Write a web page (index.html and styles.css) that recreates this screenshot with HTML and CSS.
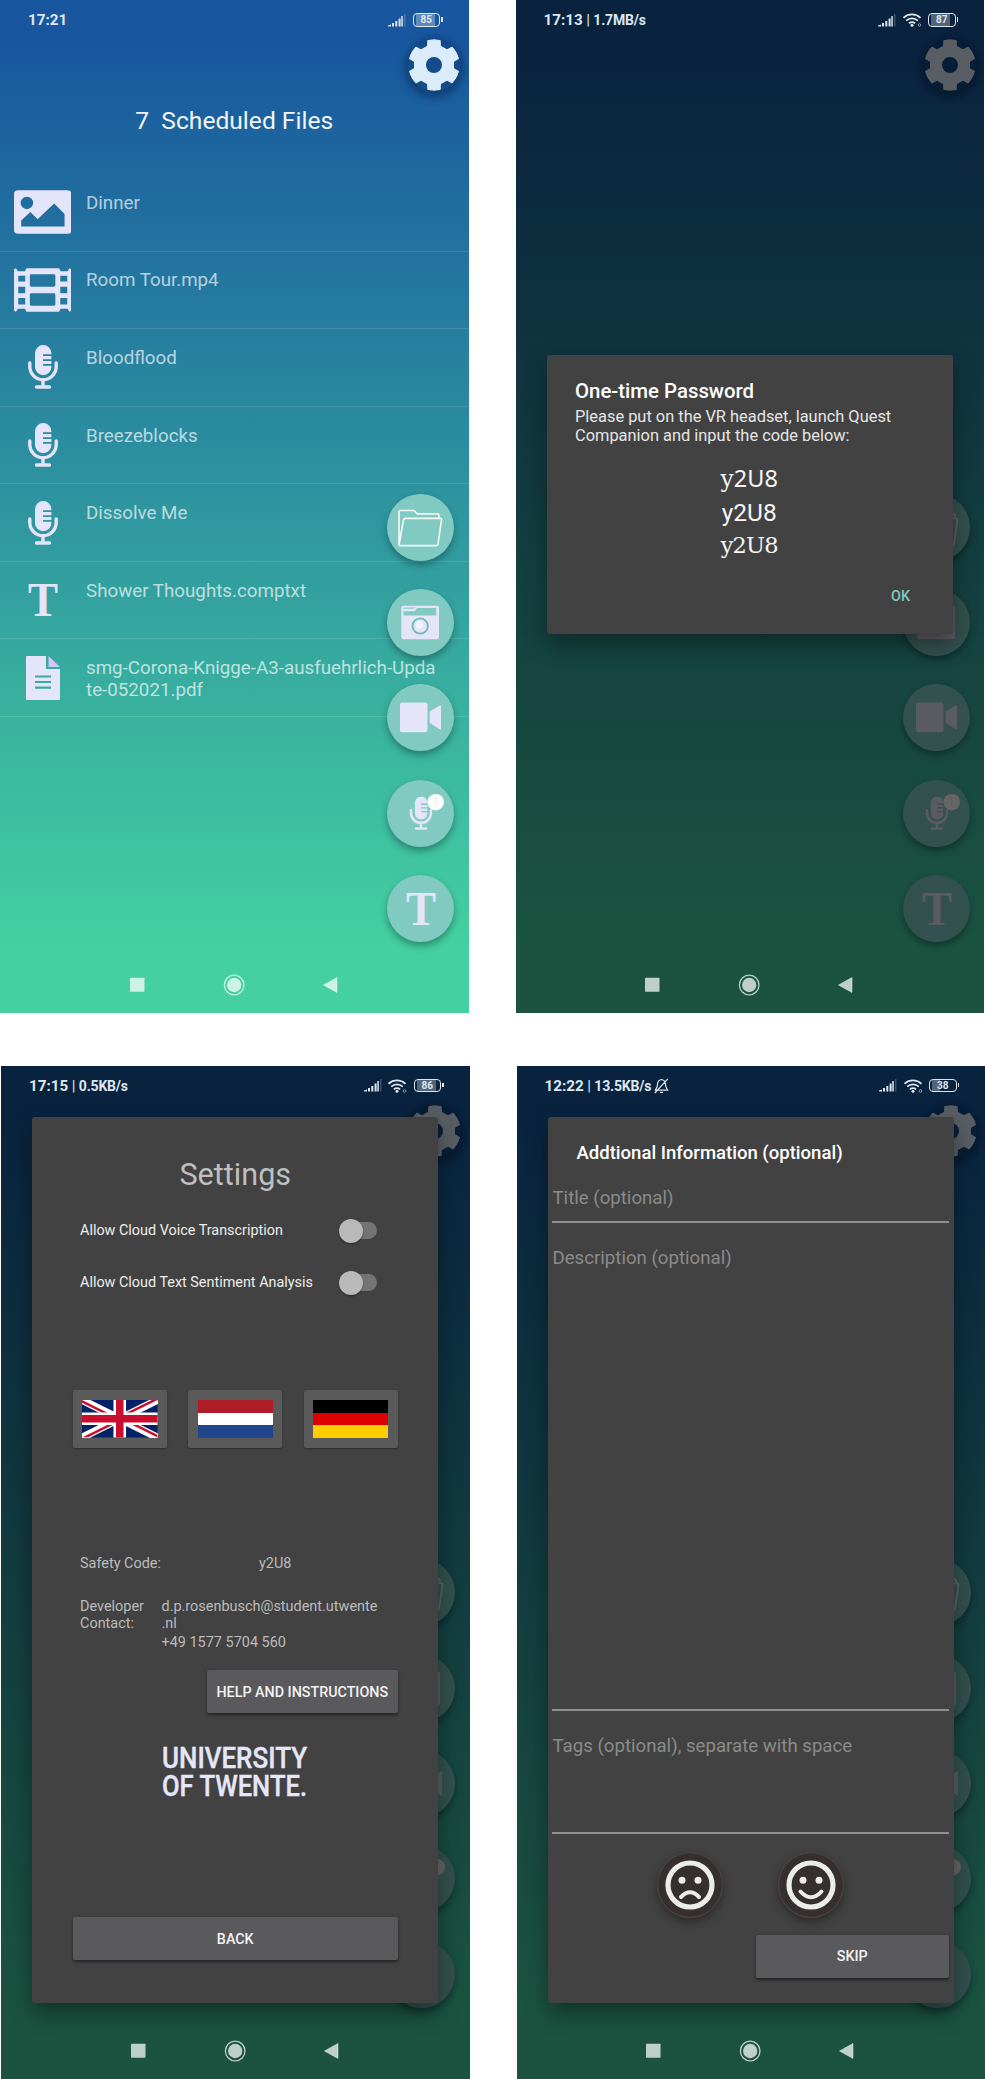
FILE: index.html
```html
<!DOCTYPE html>
<html lang="en">
<head>
<meta charset="utf-8">
<title>Quest Companion</title>
<link rel="stylesheet" href="styles.css">
</head>
<body>
<svg class="sprite" aria-hidden="true">
  <symbol id="signal" viewBox="0 0 18 13">
    <path d="M0 11.5l3-1v2H0zM4 9h2v3.5H4zM7.3 7h2v5.500h-2zM10.600 4.500h2v8h-2zM13.300 2h1.500v10.500h-1.500z" fill="currentColor"/>
    <path d="M16.300 0h1v12.500h-1z" fill="currentColor" opacity=".35"/>
  </symbol>
  <symbol id="wifi" viewBox="0 0 19 14">
    <g fill="none" stroke="currentColor" stroke-width="1.700">
      <path d="M.5 4.800a12.500 12.500 0 0 1 17 0M3.200 7.700a8.500 8.500 0 0 1 11.600 0M5.900 10.400a4.600 4.600 0 0 1 6.200 0"/>
    </g>
    <circle cx="9" cy="12.300" r="1.500" fill="currentColor"/>
    <circle cx="16.500" cy="12" r="1.300" fill="none" stroke="currentColor" stroke-width=".8" opacity=".7"/>
  </symbol>
  <symbol id="gear" viewBox="-78 -78 156 156">
    <path fill="currentColor" stroke="currentColor" stroke-width="4" stroke-linejoin="round" fill-rule="evenodd" d="M-18-73A76 76 0 0 1 18-73L19-56 39-45 54-53A76 76 0 0 1 73-20L58-11V11L73 20A76 76 0 0 1 54 53L39 45 19 56 18 73A76 76 0 0 1-18 73L-19 56-39 45-54 53A76 76 0 0 1-73 20L-58 11V-11L-73-20A76 76 0 0 1-54-53L-39-45-19-56zM0-26A26 26 0 0 0 0 26A26 26 0 0 0 0-26z"/>
  </symbol>
  <symbol id="image" viewBox="0 0 58 44">
    <path fill="currentColor" fill-rule="evenodd" d="M4 0h50a4 4 0 0 1 4 4v36a4 4 0 0 1-4 4H4a4 4 0 0 1-4-4V4a4 4 0 0 1 4-4zM13 6.500a6.300 6.300 0 0 0 0 12.600 6.300 6.300 0 0 0 0-12.600zM7.300 30.500L16.500 22l7.300 7.300L40.500 13.300 51 24v12.700H7.300z"/>
  </symbol>
  <symbol id="film" viewBox="0 0 58 44">
    <path fill="currentColor" fill-rule="evenodd" d="M2 0L4 3h7l1.500-3h33L47 3h7l2-3 2 1v42l-2 1-2-3h-7l-1.500 3h-33L11 41H4l-2 3-2-1V1zM17.500 6a1.500 1.500 0 0 0-1.500 1.500v9.700a1.500 1.500 0 0 0 1.500 1.500h22.700a1.500 1.500 0 0 0 1.500-1.500V7.500A1.500 1.500 0 0 0 40.200 6zM17.500 25.300a1.500 1.500 0 0 0-1.500 1.500v9.700a1.500 1.500 0 0 0 1.500 1.500h22.700a1.500 1.500 0 0 0 1.500-1.500v-9.700a1.500 1.500 0 0 0-1.500-1.500zM4.300 7.500v6h7v-6zM4.300 18.700v6.500h7v-6.500zM4.300 30v6.500h7V30zM46.700 7.500v6h7v-6zM46.700 18.700v6.500h7v-6.500zM46.700 30v6.500h7V30z"/>
  </symbol>
  <symbol id="mic" viewBox="0 0 30 44">
    <path fill="currentColor" d="M7 8.200a8.200 8.200 0 0 1 16.400 0v1.100h-8.400v1.700h8.400v3.200h-8.400v1.700h8.400v3.200h-8.400v1.700h8.400v1.200a8.200 8.200 0 0 1-16.400 0z"/>
    <path fill="none" stroke="currentColor" stroke-width="3.400" stroke-linecap="round" d="M1.800 18v3.500a13.200 13.200 0 0 0 26.400 0V18M15 35v6M8.500 42h13"/>
  </symbol>
  <symbol id="doc" viewBox="0 0 34 44">
    <path fill="currentColor" d="M1 0h19v13h14v30a1 1 0 0 1-1 1H1a1 1 0 0 1-1-1V1a1 1 0 0 1 1-1z"/>
    <path fill="#cfc8fa" d="M22.500 0L34 11H22.500z"/>
    <path stroke="#36ab9f" stroke-width="2.200" d="M9 20.500h16M9 26h16M9 31.700h16"/>
  </symbol>
  <symbol id="letter" viewBox="0 0 32 34">
    <text x="16" y="33" text-anchor="middle" textLength="30" lengthAdjust="spacingAndGlyphs" class="letter-t">T</text>
  </symbol>
  <symbol id="f-folder" viewBox="-33.500 -33.500 67 67">
    <path fill="none" stroke="#f3f7f6" stroke-width="1.700" stroke-linejoin="round" d="M-21.500 17V-15.500Q-21.500-17-20-17H-7Q-6-17-5-15.500L-3.500-13.700H17Q18.500-13.700 18.500-12V-9.200M-15-9.200H19.500Q21.300-9.200 21-7.500L17.500 16.500Q17.300 18.200 15.500 18.200H-20Q-21.700 18.200-21.300 16.500L-17-7.500Q-16.600-9.200-15-9.200z"/>
  </symbol>
  <symbol id="f-camera" viewBox="-33.500 -33.500 67 67">
    <path fill="currentColor" fill-rule="evenodd" d="M-17.500-16.700H16.500Q18.500-16.700 18.500-14.700V14.700Q18.500 16.700 16.500 16.700H-17Q-19.200 16.700-19.200 14.700V-14.700Q-19.200-16.700-17.500-16.700zM-17-14.700V-13.700H-7L-5-15zM-17-11.200V-7H15.700V-14.500H-3.500L-6-11.200z"/>
    <circle cx="-.3" cy="3.500" r="7.700" fill="currentColor" stroke="#6cb9ae" stroke-width="1.800"/>
    <circle cx="-1" cy="2.500" r="3.500" fill="#f3f2fd"/>
  </symbol>
  <symbol id="f-video" viewBox="-33.500 -33.500 67 67">
    <rect x="-20.500" y="-15" width="27.500" height="29.700" rx="2.500" fill="currentColor"/>
    <path fill="currentColor" d="M9.200-6L19.500-12.300Q20.500-12.500 20.500-11.500V11Q20.500 12.500 19.500 12L9.200 5.500z"/>
  </symbol>
  <symbol id="f-voice" viewBox="-33.500 -33.500 67 67">
    <use href="#mic" x="-11" y="-17" width="23" height="33.500"/>
    <circle cx="15.200" cy="-11.300" r="8.300" fill="#fff"/>
    <path d="M12.800-15.500h4.600M15.100-15.500v8" stroke="#ececf4" stroke-width="1.200"/>
  </symbol>
  <symbol id="f-text" viewBox="-33.500 -33.500 67 67">
    <use href="#letter" x="-15.500" y="-17" width="32" height="34"/>
  </symbol>
  <symbol id="controls" viewBox="0 0 208 22">
    <g fill="currentColor">
      <rect x="0" y="3.700" width="14.500" height="14" rx=".6"/>
      <circle cx="104.200" cy="11" r="7.200"/>
      <path d="M207 3.500v15L193.500 11z" stroke="currentColor" stroke-linejoin="round" stroke-width=".6"/>
    </g>
    <circle cx="104.200" cy="11" r="9.800" fill="none" stroke="currentColor" stroke-width="1.300"/>
  </symbol>
  <symbol id="bell-off" viewBox="0 0 15 16">
    <path fill="none" stroke="currentColor" stroke-width="1.200" stroke-linejoin="round" d="M7.500 1.500C4.500 2 3.500 4 3.500 6.500S2.500 10 1.200 12.200H13.800C12.300 10 11.500 9 11.500 6.500S10.500 2 7.500 1.500zM6 14.300h3M.8 15L13.800.8"/>
  </symbol>
</svg>

<main class="gallery">
  <section class="phone">
    <header class="status">
      <span class="time">17:21</span>
      <span class="status-icons">
        <svg class="signal"><use href="#signal"/></svg>
        <span class="battery">85</span>
      </span>
    </header>
    <div class="gear-row"><svg class="gear"><use href="#gear"/></svg></div>
    <h1 class="heading">7&nbsp; Scheduled Files</h1>
    <ul class="files">
      <li><span class="thumb"><svg class="wide"><use href="#image"/></svg></span><span class="name">Dinner</span></li>
      <li><span class="thumb"><svg class="wide"><use href="#film"/></svg></span><span class="name">Room Tour.mp4</span></li>
      <li><span class="thumb"><svg class="mic"><use href="#mic"/></svg></span><span class="name">Bloodflood</span></li>
      <li><span class="thumb"><svg class="mic"><use href="#mic"/></svg></span><span class="name">Breezeblocks</span></li>
      <li><span class="thumb"><svg class="mic"><use href="#mic"/></svg></span><span class="name">Dissolve Me</span></li>
      <li><span class="thumb"><svg class="tee"><use href="#letter"/></svg></span><span class="name">Shower Thoughts.comptxt</span></li>
      <li><span class="thumb"><svg class="doc"><use href="#doc"/></svg></span><span class="name">smg-Corona-Knigge-A3-ausfuehrlich-Update-052021.pdf</span></li>
    </ul>
    <div class="fabs">
      <svg class="fab"><use href="#f-folder"/></svg>
      <svg class="fab"><use href="#f-camera"/></svg>
      <svg class="fab"><use href="#f-video"/></svg>
      <svg class="fab"><use href="#f-voice"/></svg>
      <svg class="fab"><use href="#f-text"/></svg>
    </div>
    <footer class="nav"><svg class="controls"><use href="#controls"/></svg></footer>
  </section>

  <section class="phone">
    <header class="status">
      <span class="time">17:13<i>|</i><b>1.7MB/s</b></span>
      <span class="status-icons">
        <svg class="signal"><use href="#signal"/></svg>
        <svg class="wifi"><use href="#wifi"/></svg>
        <span class="battery">87</span>
      </span>
    </header>
    <div class="gear-row"><svg class="gear"><use href="#gear"/></svg></div>
    <div class="fabs">
      <svg class="fab"><use href="#f-folder"/></svg>
      <svg class="fab"><use href="#f-camera"/></svg>
      <svg class="fab"><use href="#f-video"/></svg>
      <svg class="fab"><use href="#f-voice"/></svg>
      <svg class="fab"><use href="#f-text"/></svg>
    </div>
    <div class="scrim"></div>
    <div class="dialog otp">
      <h2 class="otp-title">One-time Password</h2>
      <p class="otp-text">Please put on the VR headset, launch Quest<br>Companion and input the code below:</p>
      <div class="codes">
        <span class="code code-mixed"><em>y</em>2U8</span>
        <span class="code">y2U8</span>
        <span class="code code-serif">y2U8</span>
      </div>
      <span class="ok">OK</span>
    </div>
    <footer class="nav"><svg class="controls"><use href="#controls"/></svg></footer>
  </section>

  <section class="phone">
    <header class="status">
      <span class="time">17:15<i>|</i><b>0.5KB/s</b></span>
      <span class="status-icons">
        <svg class="signal"><use href="#signal"/></svg>
        <svg class="wifi"><use href="#wifi"/></svg>
        <span class="battery">86</span>
      </span>
    </header>
    <div class="gear-row"><svg class="gear"><use href="#gear"/></svg></div>
    <div class="fabs">
      <svg class="fab"><use href="#f-folder"/></svg>
      <svg class="fab"><use href="#f-camera"/></svg>
      <svg class="fab"><use href="#f-video"/></svg>
      <svg class="fab"><use href="#f-voice"/></svg>
      <svg class="fab"></svg>
    </div>
    <div class="scrim"></div>
    <div class="dialog tall settings">
      <h2 class="settings-title">Settings</h2>
      <div class="option"><span>Allow Cloud Voice Transcription</span><span class="switch"></span></div>
      <div class="option"><span>Allow Cloud Text Sentiment Analysis</span><span class="switch"></span></div>
      <div class="flags">
        <span class="flag-button">
          <svg class="flag" viewBox="0 0 60 30" preserveAspectRatio="none">
            <clipPath id="quarters"><path d="M30 15h30v15zv15H0zH0V0zV0h30z"/></clipPath>
            <path fill="#012169" d="M0 0h60v30H0z"/>
            <path stroke="#fff" stroke-width="6" d="M0 0l60 30M60 0L0 30"/>
            <path stroke="#c8102e" stroke-width="4" clip-path="url(#quarters)" d="M0 0l60 30M60 0L0 30"/>
            <path stroke="#fff" stroke-width="10" d="M30 0v30M0 15h60"/>
            <path stroke="#c8102e" stroke-width="6" d="M30 0v30M0 15h60"/>
          </svg>
        </span>
        <span class="flag-button"><span class="flag nl"></span></span>
        <span class="flag-button"><span class="flag de"></span></span>
      </div>
      <div class="safety"><span>Safety Code:</span><span>y2U8</span></div>
      <div class="contact">
        <span class="dev">Developer Contact:</span>
        <div>
          <p>d.p.rosenbusch@student.utwente<br>.nl</p>
          <p class="tel">+49 1577 5704 560</p>
        </div>
      </div>
      <span class="button help">HELP AND INSTRUCTIONS</span>
      <svg class="logo" viewBox="0 0 148 54">
        <text x="0" y="23" textLength="145" lengthAdjust="spacingAndGlyphs">UNIVERSITY</text>
        <text x="0" y="51.200" textLength="145" lengthAdjust="spacingAndGlyphs">OF TWENTE.</text>
      </svg>
      <span class="button back">BACK</span>
    </div>
    <footer class="nav"><svg class="controls"><use href="#controls"/></svg></footer>
  </section>

  <section class="phone">
    <header class="status">
      <span class="time">12:22<i>|</i><b>13.5KB/s</b><svg class="bell"><use href="#bell-off"/></svg></span>
      <span class="status-icons">
        <svg class="signal"><use href="#signal"/></svg>
        <svg class="wifi"><use href="#wifi"/></svg>
        <span class="battery low">38</span>
      </span>
    </header>
    <div class="gear-row"><svg class="gear"><use href="#gear"/></svg></div>
    <div class="fabs">
      <svg class="fab"><use href="#f-folder"/></svg>
      <svg class="fab"><use href="#f-camera"/></svg>
      <svg class="fab"><use href="#f-video"/></svg>
      <svg class="fab"><use href="#f-voice"/></svg>
      <svg class="fab"></svg>
    </div>
    <div class="scrim"></div>
    <div class="dialog tall info">
      <h2 class="info-title">Addtional Information (optional)</h2>
      <div class="field field-title">Title (optional)</div>
      <div class="field field-description">Description (optional)</div>
      <div class="field field-tags">Tags (optional), separate with space</div>
      <div class="moods">
        <svg class="mood" viewBox="-33 -33 66 66">
          <circle r="32.300" fill="#352f2f" stroke="#514545"/>
          <circle r="22" fill="none" stroke="#ececec" stroke-width="5.200"/>
          <circle cx="-8" cy="-4.700" r="3.500" fill="#ececec"/><circle cx="8" cy="-4.700" r="3.500" fill="#ececec"/>
          <path d="M-9 12Q0 2.500 9 12" fill="none" stroke="#ececec" stroke-width="4" stroke-linecap="round"/>
        </svg>
        <svg class="mood" viewBox="-33 -33 66 66">
          <circle r="32.300" fill="#352f2f" stroke="#514545"/>
          <circle r="22" fill="none" stroke="#ececec" stroke-width="5.200"/>
          <circle cx="-8" cy="-4.700" r="3.500" fill="#ececec"/><circle cx="8" cy="-4.700" r="3.500" fill="#ececec"/>
          <path d="M-10.500 6.500Q0 18 10.500 6.500" fill="none" stroke="#ececec" stroke-width="4" stroke-linecap="round"/>
        </svg>
      </div>
      <span class="button skip">SKIP</span>
    </div>
    <footer class="nav"><svg class="controls"><use href="#controls"/></svg></footer>
  </section>
</main>
</body>
</html>
```

FILE: styles.css
```css
* { box-sizing: border-box; margin: 0; padding: 0; }
body { background: #fff; font-family: Roboto, "Liberation Sans", sans-serif; width: 985px; height: 2079px; overflow: hidden; }
svg { display: block; }
.sprite { position: absolute; width: 0; height: 0; }

.gallery { display: grid; grid-template-columns: 468.500px 468.500px; grid-template-rows: 1012.500px 1013.500px; gap: 53px 47px; }
.phone { position: relative; display: flex; flex-direction: column; overflow: hidden; color: #e4e4fb; background: linear-gradient(#18579f 40px, #44d0a0 945px); }
.phone:nth-child(n+3) { transform: translateX(1px); }

/* System bars */
.status { position: relative; z-index: 3; height: 40px; padding: 0 28.500px 0 28px; display: flex; justify-content: space-between; align-items: center; color: #dfe6ee; }
.time { display: flex; align-items: center; font-size: 15.200px; font-weight: 700; line-height: 40px; }
.time i { font-style: normal; font-weight: 400; margin: 0 3.500px; }
.time b { font-size: 14px; font-weight: 700; letter-spacing: -.2px; }
.bell { width: 15px; height: 16px; margin-left: 3px; }
.status-icons { display: flex; align-items: center; gap: 6.500px; }
.signal { width: 18px; height: 13px; }
.wifi { width: 19px; height: 14px; }
.battery { position: relative; width: 27.300px; height: 13.500px; border: 1.500px solid currentColor; border-radius: 4px; font-size: 10px; line-height: 11px; font-weight: 700; text-align: center; background: linear-gradient(90deg, transparent 2px, rgba(255,255,255,.3) 2px, rgba(255,255,255,.3) 21px, transparent 21px); }
.battery.low { background: linear-gradient(90deg, transparent 2px, rgba(255,255,255,.3) 2px, rgba(255,255,255,.3) 10px, transparent 10px); }
.battery::after { content: ""; position: absolute; right: -3.500px; top: 3px; width: 1.500px; height: 4.500px; background: currentColor; }
.nav { position: relative; z-index: 3; margin-top: auto; height: 39px; padding-left: 129.600px; color: rgba(255,255,255,.72); }
.controls { width: 208px; height: 22px; }

/* Main screen */
.gear-row { display: flex; justify-content: flex-end; height: 50px; padding-right: 8.500px; }
.gear { width: 52px; height: 52px; color: #dcecfb; border-radius: 50%; background: rgba(12,50,100,.35); box-shadow: 0 3px 7px 4px rgba(10,40,85,.5); flex: none; margin-top: -1px; }
.heading { height: 84px; padding-top: 17px; text-align: center; font-weight: 400; font-size: 24.600px; line-height: 28px; color: #f2f3f3; }
.files { list-style: none; }
.files li { display: flex; height: 77.580px; border-bottom: 1.500px solid rgba(255,255,255,.13); }
.thumb { width: 86px; display: flex; align-items: center; justify-content: center; flex: none; }
.wide { width: 57.500px; height: 44px; margin-right: 1px; }
.mic { width: 30px; height: 44px; }
.tee { width: 32px; height: 34px; }
.doc { width: 34px; height: 44px; }
.letter-t { font: 700 49px/1 "Liberation Serif", serif; fill: currentColor; }
.name { padding-top: 18.800px; width: 351px; word-break: break-all; font-size: 18.750px; line-height: 21.500px; color: rgba(255,255,255,.68); }
.fabs { position: absolute; top: 493.800px; left: 387.200px; display: flex; flex-direction: column; gap: 28.350px; }
.fab { width: 67px; height: 67px; border-radius: 50%; background: #80cac2; box-shadow: 0 4px 7px rgba(0,40,40,.4); }

/* Dialogs */
.scrim { position: absolute; inset: 0; background: rgba(0,0,0,.6); z-index: 1; }
.dialog { position: absolute; z-index: 2; left: 31px; width: 406px; background: #424242; border-radius: 3px; box-shadow: 0 10px 22px rgba(0,0,0,.38); display: flex; flex-direction: column; }
.button { display: flex; align-items: center; justify-content: center; height: 43.500px; background: #5a5a5c; border-radius: 2px; box-shadow: 0 1.500px 3px rgba(0,0,0,.45); color: #f3f3f3; font-weight: 500; font-size: 14.300px; }

.otp { top: 354.500px; left: 31px; height: 279px; padding: 24px 29px 0 28.500px; }
.otp-title { font-size: 20.400px; font-weight: 500; line-height: 24px; color: #fff; }
.otp-text { font-size: 16.400px; line-height: 19px; color: #e6e6e6; margin-top: 4px; white-space: nowrap; }
.codes { margin-top: 17px; display: flex; flex-direction: column; align-items: center; }
.code { font-size: 24.500px; line-height: 33px; color: #f5f5f5; }
.code-mixed { font-family: "Noto Sans", sans-serif; font-size: 23.500px; }
.code-mixed em { font-style: normal; font-family: "DejaVu Serif", serif; }
.code-serif { font-family: "DejaVu Serif", serif; font-size: 22.500px; letter-spacing: -.8px; }
.ok { align-self: flex-end; margin: 25.500px 13.500px 0 0; font-size: 14.300px; line-height: 18px; font-weight: 500; color: #80cbc4; }

.tall { top: 51px; height: 886px; }
.settings { padding: 0 40.500px 0 41px; }
.settings-title { margin-top: 40.500px; text-align: center; font-weight: 400; font-size: 30.600px; line-height: 36px; color: #bfbfbf; }
.option { display: flex; justify-content: space-between; align-items: center; height: 52px; padding: 0 20.500px 0 7px; font-size: 14.400px; color: #ededed; }
.settings-title + .option { margin-top: 11.500px; }
.switch { position: relative; width: 37px; height: 17px; background: #747474; border-radius: 9px; }
.switch::after { content: ""; position: absolute; left: -1px; top: -3.500px; width: 24px; height: 24px; border-radius: 50%; background: #b9b9b9; box-shadow: 0 1px 2px rgba(0,0,0,.4); }
.flags { display: flex; justify-content: space-between; margin-top: 81.500px; }
.flag-button { width: 94px; height: 57.500px; background: #5a5a5a; border-radius: 2px; box-shadow: 0 1px 2px rgba(0,0,0,.35); display: flex; align-items: center; justify-content: center; }
.flag { width: 75.500px; height: 37.500px; }
.nl { background: linear-gradient(#ae1c28 33.300%, #fff 33.300% 66.600%, #21468b 66.600%); }
.de { background: linear-gradient(#000 33.300%, #d00 33.300% 66.600%, #ffce00 66.600%); }
.safety, .contact { padding-left: 7px; font-size: 14.450px; line-height: 17px; color: #bcbcbc; white-space: nowrap; }
.safety { display: flex; gap: 98px; margin-top: 107.200px; }
.contact { display: grid; grid-template-columns: 81.500px 1fr; margin-top: 26px; }
.dev { width: 70px; white-space: normal; }
.tel { margin-top: 2px; }
.help { width: 190.500px; align-self: flex-end; margin-top: 19.300px; }
.logo { width: 148px; height: 54px; margin: 32px 0 0 88.500px; overflow: visible; }
.logo text { font: 500 30px/1 Roboto, sans-serif; fill: #e6e6fa; stroke: #e6e6fa; stroke-width: .4px; }
.back { margin-top: 117.500px; }

.info { padding: 0 4.500px; }
.info-title { margin: 24px 0 0 24.500px; font-size: 18.550px; line-height: 24px; font-weight: 500; color: #fff; white-space: nowrap; }
.field { font-size: 18.650px; line-height: 22px; color: #8b8b8b; border-bottom: 2px solid #8f8f8f; padding-left: .5px; }
.field-title { margin-top: 22.500px; height: 35.500px; }
.field-description { padding-top: 24px; height: 488px; }
.field-tags { padding-top: 24px; height: 123px; }
.moods { display: flex; justify-content: center; gap: 54.700px; margin-top: 18px; }
.mood { width: 66px; height: 66px; border-radius: 50%; box-shadow: 0 4px 8px rgba(0,0,0,.35); }
.skip { width: 193.500px; align-self: flex-end; margin-top: 17px; }
```
